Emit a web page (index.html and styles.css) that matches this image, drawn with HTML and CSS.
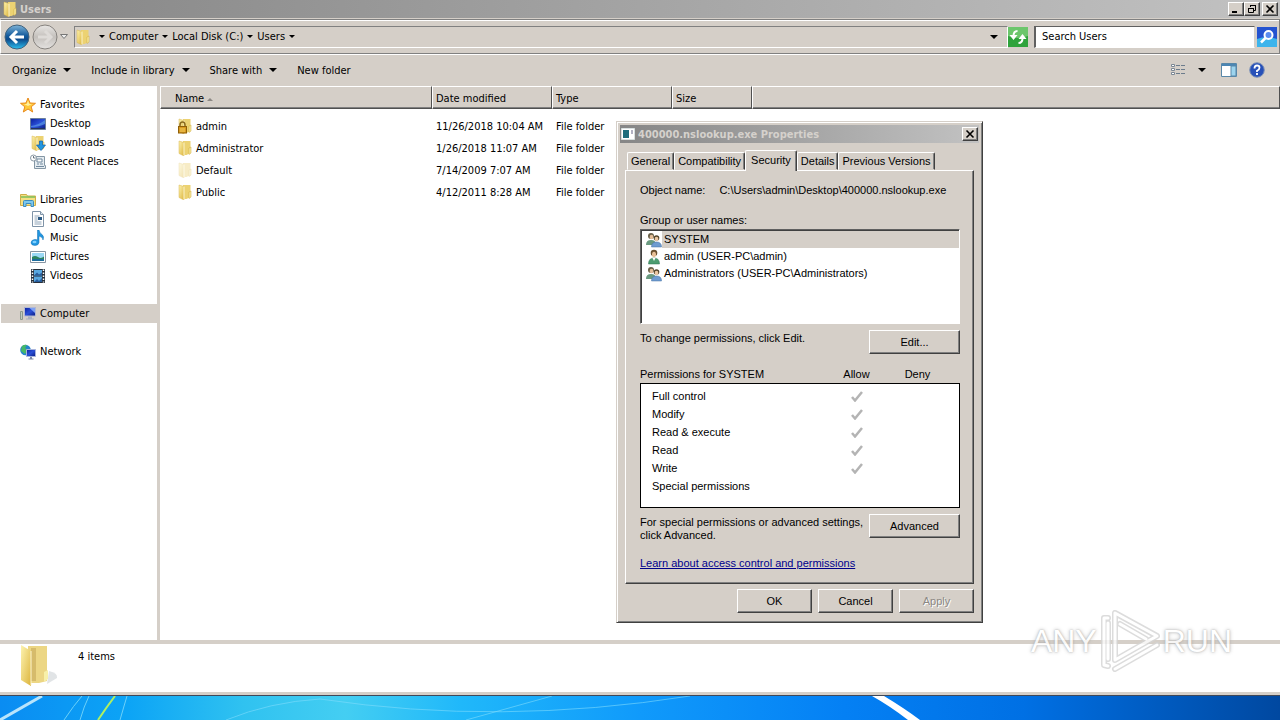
FILE: index.html
```html
<!DOCTYPE html>
<html lang="en">

<head>
    <meta charset="UTF-8">
    <title>Users</title>
    <link rel="stylesheet" href="styles.css">
</head>

<body>

    <!-- Shared icons -->
    <svg class="sprite" width="0" height="0">
        <defs>
            <linearGradient id="gFolder" x1="0" x2="1" y1="0" y2="1">
                <stop offset="0" stop-color="#fdf3b0" />
                <stop offset="1" stop-color="#dcb43c" />
            </linearGradient>
            <linearGradient id="gBlue" x1="0" x2="0" y1="0" y2="1">
                <stop offset="0" stop-color="#7fb4d8" />
                <stop offset="0.45" stop-color="#135a9c" />
                <stop offset="0.6" stop-color="#0d4b8c" />
                <stop offset="1" stop-color="#2cc0f0" />
            </linearGradient>
            <linearGradient id="gGray" x1="0" x2="0" y1="0" y2="1">
                <stop offset="0" stop-color="#e8e6e4" />
                <stop offset="0.5" stop-color="#c4c0bc" />
                <stop offset="1" stop-color="#e4e2e0" />
            </linearGradient>
            <linearGradient id="gScreen" x1="0" x2="1" y1="0" y2="1">
                <stop offset="0" stop-color="#0a1e9c" />
                <stop offset="0.5" stop-color="#2a50d8" />
                <stop offset="1" stop-color="#0a1a80" />
            </linearGradient>
        </defs>
        <symbol id="folder" viewBox="0 0 16 16">
            <path d="M6 1h7.500v12l-4 2H6z" fill="#ecd272" />
            <path d="M12 8l2-1v6l-2 1.500z" fill="#f7e9a0" stroke="#cfa93a" stroke-width=".5" />
            <path d="M2 1l5 1.500V16l-5-2.500z" fill="url(#gFolder)" stroke="#d9b650" stroke-width=".5" />
            <path d="M7 2.500V15.500" stroke="#fff9d4" />
        </symbol>
        <symbol id="lock" viewBox="0 0 16 16">
            <use href="#folder" />
            <path d="M3 9V7a2 2.500 0 0 1 5 0v2" fill="none" stroke="#8a6a20" stroke-width="1.500" />
            <rect x="1.500" y="8.500" width="8" height="6.500" fill="#d89a20" stroke="#8f5f08" />
            <path d="M3 11h5M3 13h5" stroke="#f5cf60" />
        </symbol>
        <symbol id="star" viewBox="0 0 16 16">
            <path d="M8 1l2 5 5.500.300-4.300 3.500L12.700 15 8 12 3.300 15l1.500-5.200L.500 6.300 6 6z" fill="#ffc93a" stroke="#e88a1c" />
            <path d="M8 3.500l1.200 3.500H12L8 9 4 7h2.800z" fill="#fff0a0" />
        </symbol>
        <symbol id="desktop" viewBox="0 0 16 16">
            <path d="M.500 2.500h15v11H.500z" fill="url(#gScreen)" stroke="#6b7f9c" />
            <path d="M1 10q8-1 14-6v4q-6 3-14 3z" fill="#5b9be8" opacity=".7" />
            <path d="M1 12.500h14" stroke="#24345c" />
        </symbol>
        <symbol id="downloads" viewBox="0 0 16 16">
            <use href="#folder" />
            <path d="M9.500 6h3v4H15.500l-4.500 5.500L6.500 10h3z" fill="#2196e0" stroke="#0e5ea8" stroke-width=".7" />
        </symbol>
        <symbol id="recent" viewBox="0 0 16 16">
            <path d="M4.500 2.500h10v9h1v3h-11z" fill="#e4ebf0" stroke="#8496a4" />
            <path d="M7 5h5v3H7zM7 10h2M10 10h3M6 12.500h8" fill="#fff" stroke="#71899e" />
            <circle cx="3.500" cy="4" r="3" fill="#fff" stroke="#8a98a4" />
            <path d="M3.500 2v2h2" fill="none" stroke="#456" stroke-width=".8" />
        </symbol>
        <symbol id="libraries" viewBox="0 0 16 16">
            <path d="M.500 2.500h6l1 1.500h8v9.500H.500z" fill="#f5df82" stroke="#cfae48" />
            <path d="M1 5h14" stroke="#7bbf58" stroke-width="1.500" />
            <path d="M3.500 14.500v-5q0-1 1-1h8q1 0 1 1v5h-2.500v-3h-5v3z" fill="#7cc8ee" stroke="#3c8cc0" />
        </symbol>
        <symbol id="documents" viewBox="0 0 16 16">
            <path d="M2.500.500h8l3 3v12h-11z" fill="#fff" stroke="#8094a8" />
            <path d="M10.500.500v3h3" fill="#dde8f0" stroke="#8094a8" />
            <path d="M4.500 5h5M4.500 7h3M4.500 9h3M4.500 11h7M4.500 13h7" stroke="#8fa4b8" />
            <path d="M8 6h4v3H8z" fill="#2c5a84" />
        </symbol>
        <symbol id="music" viewBox="0 0 16 16">
            <path d="M7.500 0h1.500q.500 3 3 4.500 2.500 2 1 5.500 0-3-4-4v6.500q-.500 3-4 3t-4-2.500q0-3 3.500-3.500 2-.300 3 .500z" fill="#2196e0" stroke="#1270b4" stroke-width=".5" />
            <ellipse cx="4.500" cy="12" rx="2" ry="1.200" fill="#7fd0ff" />
        </symbol>
        <symbol id="pictures" viewBox="0 0 16 16">
            <path d="M.500 2.500h15v11H.500z" fill="#fff" stroke="#8795a2" />
            <path d="M2 4h12v8H2z" fill="#9bd8f4" />
            <path d="M2 8q3-2 6 0t6-.500V10H2z" fill="#2c8460" />
            <path d="M2 10h12v2H2z" fill="#1c6c9c" />
        </symbol>
        <symbol id="videos" viewBox="0 0 16 16">
            <path d="M1 1h14v14H1z" fill="#26303c" />
            <path d="M4 2h8v5.500H4zM4 8.500h8V14H4z" fill="#58a8e0" />
            <path d="M4 7.500l3-3 2 2 3-2v3zM4 14l3-3 2 2 3-3v4z" fill="#275c9c" />
            <path d="M2.500 1.500v13M13.500 1.500v13" stroke="#fff" stroke-width="1.500" stroke-dasharray="1.500 1.500" />
        </symbol>
        <symbol id="computer" viewBox="0 0 16 16">
            <path d="M.500 5.500h2v8h-2z" fill="#c0ccc0" stroke="#8c988c" />
            <path d="M4.500 1.500h11v8.500h-11z" fill="url(#gScreen)" stroke="#b0b8d4" />
            <path d="M9.500 2l5.500 0v5z" fill="#7ca0f4" />
            <path d="M8 10.500h4v2h2v1H6v-1h2z" fill="#a8b0c0" />
        </symbol>
        <symbol id="network" viewBox="0 0 16 16">
            <circle cx="5.500" cy="6" r="5.300" fill="#2484cc" />
            <path d="M2 2q3-2 5-1L5 4l3 2-3 4-4-3z" fill="#46b868" />
            <path d="M6.500 5.500h9v7h-9z" fill="url(#gScreen)" stroke="#a8b4dc" />
            <path d="M10 13h2v1.500h1.500v1h-5v-1H10z" fill="#7a88a8" />
        </symbol>
        <symbol id="group" viewBox="0 0 16 16">
            <circle cx="5" cy="4" r="3" fill="#6a6048" />
            <ellipse cx="5.500" cy="5" rx="1.800" ry="2.300" fill="#e4be98" />
            <path d="M0 13q0-5 5-5t5 5z" fill="#6a9a80" />
            <circle cx="10.500" cy="6" r="2.800" fill="#54452c" />
            <ellipse cx="10.500" cy="7" rx="1.800" ry="2.300" fill="#ecc8a4" />
            <path d="M5.500 15q0-5 5-5t5 5z" fill="#6f9cd0" stroke="#4470a4" stroke-width=".5" />
        </symbol>
        <symbol id="user" viewBox="0 0 16 16">
            <circle cx="8" cy="4" r="3.300" fill="#6a5030" />
            <ellipse cx="8" cy="5.500" rx="2" ry="2.800" fill="#e8c098" />
            <path d="M2.500 15q0-6 5.500-6t5.500 6z" fill="#4c9c70" stroke="#2c7450" stroke-width=".5" />
            <path d="M6.500 9h3L8 12z" fill="#fff" />
        </symbol>
        <symbol id="check" viewBox="0 0 12 12">
            <path d="M1 7l3 3.500L11 2" fill="none" stroke="#b4b4b4" stroke-width="2.500" />
        </symbol>
        <symbol id="down" viewBox="0 0 8 4">
            <path d="M0 0h8L4 4z" />
        </symbol>
    </svg>

    <div class="window">
        <div class="titlebar">
            <svg class="icon"><use href="#folder" /></svg>
            <h1>Users</h1>
            <button class="sys" aria-label="Minimize"><svg viewBox="0 0 12 10"><path d="M2 8h5" stroke="#000" stroke-width="2" /></svg></button>
            <button class="sys" aria-label="Restore"><svg viewBox="0 0 12 10"><path d="M4.500 3V1.500h5v5H8M4 1.500h6M2.500 4.500h5v4h-5zM2 4.500h6" fill="none" stroke="#000" /></svg></button>
            <button class="sys close" aria-label="Close"><svg viewBox="0 0 12 10"><path d="M2.500 1.500l7 7M9.500 1.500l-7 7" stroke="#000" stroke-width="1.600" /></svg></button>
        </div>

        <div class="navbar">
            <button class="round" aria-label="Back">
                <svg viewBox="0 0 26 26"><circle cx="13" cy="13" r="12" fill="url(#gBlue)" stroke="#42627c" /><path d="M13 7l-6 6 6 6M7.500 13H20" fill="none" stroke="#fff" stroke-width="3" /></svg>
            </button>
            <button class="round" aria-label="Forward">
                <svg viewBox="0 0 26 26"><circle cx="13" cy="13" r="12" fill="url(#gGray)" stroke="#86827e" /><path d="M13 7l6 6-6 6M18.500 13H6" fill="none" stroke="#dedbd8" stroke-width="3" /></svg>
            </button>
            <button class="recent" aria-label="Recent pages"><svg viewBox="0 0 8 5"><path d="M.500.500h7L4 4.500z" fill="#eee" stroke="#777" /></svg></button>
            <div class="address">
                <svg class="icon"><use href="#folder" /></svg>
                <svg class="tri"><use href="#down" /></svg>
                <button>Computer</button>
                <svg class="tri"><use href="#down" /></svg>
                <button>Local Disk (C:)</button>
                <svg class="tri"><use href="#down" /></svg>
                <button>Users</button>
                <svg class="tri"><use href="#down" /></svg>
                <button class="history" aria-label="Previous locations"><svg class="arrow"><use href="#down" /></svg></button>
            </div>
            <button class="square" aria-label="Refresh">
                <svg viewBox="0 0 20 20"><path d="M0 0h20v20H0z" fill="#2fa33c" /><path d="M0 0h20v9q-10 4-20 0z" fill="#6cc66c" /><path d="M9.500 4Q5.500 4 5.500 9M10.500 16q4 0 4-5" fill="none" stroke="#fff" stroke-width="2" /><path d="M1.500 8h8l-4 5zM10.500 12h8l-4-5z" fill="#fff" /></svg>
            </button>
            <input class="search" type="text" value="Search Users" aria-label="Search Users">
            <button class="square" aria-label="Search">
                <svg viewBox="0 0 20 20"><path d="M0 0h20v20H0z" fill="#2453d0" /><path d="M0 12q10-4 20 0v8H0z" fill="#3cb4ec" /><circle cx="11.500" cy="8" r="4" fill="#5a8cf0" stroke="#fff" stroke-width="2" /><path d="M8.500 11L4 15.500" stroke="#fff" stroke-width="2.500" /></svg>
            </button>
        </div>

        <div class="toolbar">
            <button>Organize <svg class="arrow"><use href="#down" /></svg></button>
            <button>Include in library <svg class="arrow"><use href="#down" /></svg></button>
            <button>Share with <svg class="arrow"><use href="#down" /></svg></button>
            <button>New folder</button>
            <div class="tools">
                <button class="views" aria-label="Change your view">
                    <svg class="icon" viewBox="0 0 16 16"><path d="M1.500 2.500h3v2h-3zM1.500 6.500h3v2h-3zM1.500 10.500h3v2h-3z" fill="#fff" stroke="#7b8794" /><path d="M6 3.500h4M11 3.500h4M6 7.500h4M11 7.500h4M6 11.500h4M11 11.500h4" stroke="#6c7c8c" /></svg>
                    <svg class="arrow"><use href="#down" /></svg>
                </button>
                <button aria-label="Preview pane">
                    <svg class="icon" viewBox="0 0 16 16"><path d="M.500 1.500h15v13H.500z" fill="#fff" stroke="#5887a8" /><path d="M1 3h14" stroke="#4b86b4" stroke-width="2" /><path d="M10 4h5v10h-5z" fill="#9cd4ee" stroke="#5887a8" /></svg>
                </button>
                <button aria-label="Help">
                    <svg class="icon" viewBox="0 0 16 16"><circle cx="8" cy="8" r="7.300" fill="#2750b8" stroke="#7f93b8" /><path d="M5.500 6.500q0-3 2.500-3t2.500 2.300Q10.500 7.500 8 8.800V10M8 11v2" fill="none" stroke="#fff" stroke-width="1.800" /></svg>
                </button>
            </div>
        </div>

        <div class="content">
            <nav class="sidebar">
                <ul>
                    <li><svg class="icon"><use href="#star" /></svg>Favorites</li>
                    <li class="sub"><svg class="icon"><use href="#desktop" /></svg>Desktop</li>
                    <li class="sub"><svg class="icon"><use href="#downloads" /></svg>Downloads</li>
                    <li class="sub"><svg class="icon"><use href="#recent" /></svg>Recent Places</li>
                </ul>
                <ul>
                    <li><svg class="icon"><use href="#libraries" /></svg>Libraries</li>
                    <li class="sub"><svg class="icon"><use href="#documents" /></svg>Documents</li>
                    <li class="sub"><svg class="icon"><use href="#music" /></svg>Music</li>
                    <li class="sub"><svg class="icon"><use href="#pictures" /></svg>Pictures</li>
                    <li class="sub"><svg class="icon"><use href="#videos" /></svg>Videos</li>
                </ul>
                <ul>
                    <li class="selected"><svg class="icon"><use href="#computer" /></svg>Computer</li>
                </ul>
                <ul>
                    <li><svg class="icon"><use href="#network" /></svg>Network</li>
                </ul>
            </nav>

            <main class="files">
                <table>
                    <colgroup>
                        <col class="col-name">
                        <col class="col-date">
                        <col class="col-type">
                        <col class="col-size">
                        <col>
                    </colgroup>
                    <thead>
                        <tr>
                            <th>Name <svg class="sort" viewBox="0 0 6 3"><path d="M0 3l3-3 3 3z" fill="#8c8884" /></svg></th>
                            <th>Date modified</th>
                            <th>Type</th>
                            <th>Size</th>
                            <th></th>
                        </tr>
                    </thead>
                    <tbody>
                        <tr>
                            <td><svg class="icon"><use href="#lock" /></svg>admin</td>
                            <td>11/26/2018 10:04 AM</td>
                            <td>File folder</td>
                            <td></td>
                            <td></td>
                        </tr>
                        <tr>
                            <td><svg class="icon"><use href="#folder" /></svg>Administrator</td>
                            <td>1/26/2018 11:07 AM</td>
                            <td>File folder</td>
                            <td></td>
                            <td></td>
                        </tr>
                        <tr>
                            <td><svg class="icon faded"><use href="#folder" /></svg>Default</td>
                            <td>7/14/2009 7:07 AM</td>
                            <td>File folder</td>
                            <td></td>
                            <td></td>
                        </tr>
                        <tr>
                            <td><svg class="icon"><use href="#folder" /></svg>Public</td>
                            <td>4/12/2011 8:28 AM</td>
                            <td>File folder</td>
                            <td></td>
                            <td></td>
                        </tr>
                    </tbody>
                </table>
            </main>
        </div>

        <footer class="details">
            <svg class="big-folder" viewBox="0 0 40 44">
                <path d="M27 40l10-6q1-5-8-7z" fill="#d4d8dc" opacity=".7" />
                <path d="M8 2h19v35l-8 2H8z" fill="#ecd684" />
                <path d="M11 4h5v33h-5z" fill="#c8a95a" opacity=".6" />
                <path d="M24 28l4-2v9l-4 3z" fill="#f8f0a8" />
                <path d="M1 1l10 6v35L1 36z" fill="url(#gFolder)" />
                <path d="M11 7v34" stroke="#fdf6d0" />
            </svg>
            <p>4 items</p>
        </footer>
    </div>

    <svg class="wallpaper" viewBox="0 0 1280 24" preserveAspectRatio="none">
        <defs>
            <linearGradient id="sky">
                <stop offset="0" stop-color="#0a8cf2" />
                <stop offset=".1" stop-color="#0ca4f6" />
                <stop offset=".19" stop-color="#30c2f0" />
                <stop offset=".27" stop-color="#44cef2" />
                <stop offset=".36" stop-color="#20b8fa" />
                <stop offset=".5" stop-color="#109afb" />
                <stop offset=".66" stop-color="#0480f4" />
                <stop offset=".8" stop-color="#0070e4" />
                <stop offset="1" stop-color="#0048a0" />
            </linearGradient>
        </defs>
        <path d="M0 0h1280v24H0z" fill="url(#sky)" />
        <path d="M0 24L42 0" stroke="#b8e4fc" stroke-width="3" />
        <path d="M64 24Q74 9 82 0M80 24Q84 10 89 0M120 24Q124 10 127 0" fill="none" stroke="#6cd0f8" />
        <path d="M98 24Q106 12 115 0" fill="none" stroke="#b0f060" stroke-width="2" />
        <path d="M226 24Q270 6 320 3Q500 30 690 0M466 24L552 0" fill="none" stroke="#80dcfc" opacity=".6" />
        <path d="M872 0h12q20 12 36 24h-12q-18-14-36-24z" fill="#fff" />
    </svg>

    <section class="dialog">
        <div class="titlebar">
            <svg class="icon" viewBox="0 0 16 16"><path d="M1.500 2.500h13v11h-13z" fill="#fff" stroke="#d8e0e0" /><path d="M3 4h6v8H3z" fill="#1c6c7c" /><path d="M11 5h2M11 7h2" stroke="#668" /></svg>
            <h2>400000.nslookup.exe Properties</h2>
            <button class="sys" aria-label="Close"><svg viewBox="0 0 12 10"><path d="M2.500 1.500l7 7M9.500 1.500l-7 7" stroke="#000" stroke-width="1.600" /></svg></button>
        </div>

        <div class="tabs">
            <button>General</button>
            <button>Compatibility</button>
            <button class="active">Security</button>
            <button>Details</button>
            <button>Previous Versions</button>
        </div>

        <div class="panel">
            <div class="object">
                <span>Object name:</span>
                <span>C:\Users\admin\Desktop\400000.nslookup.exe</span>
            </div>

            <p>Group or user names:</p>
            <ul class="users">
                <li class="selected"><svg class="icon"><use href="#group" /></svg><span>SYSTEM</span></li>
                <li><svg class="icon"><use href="#user" /></svg><span>admin (USER-PC\admin)</span></li>
                <li><svg class="icon"><use href="#group" /></svg><span>Administrators (USER-PC\Administrators)</span></li>
            </ul>

            <div class="row">
                <p>To change permissions, click Edit.</p>
                <button class="btn wide">Edit...</button>
            </div>

            <table class="permissions">
                <colgroup>
                    <col>
                    <col class="col-check">
                    <col class="col-check">
                    <col class="col-end">
                </colgroup>
                <thead>
                    <tr>
                        <th>Permissions for SYSTEM</th>
                        <th>Allow</th>
                        <th>Deny</th>
                        <th></th>
                    </tr>
                </thead>
                <tbody>
                    <tr><td>Full control</td><td><svg class="check"><use href="#check" /></svg></td><td></td><td></td></tr>
                    <tr><td>Modify</td><td><svg class="check"><use href="#check" /></svg></td><td></td><td></td></tr>
                    <tr><td>Read &amp; execute</td><td><svg class="check"><use href="#check" /></svg></td><td></td><td></td></tr>
                    <tr><td>Read</td><td><svg class="check"><use href="#check" /></svg></td><td></td><td></td></tr>
                    <tr><td>Write</td><td><svg class="check"><use href="#check" /></svg></td><td></td><td></td></tr>
                    <tr><td>Special permissions</td><td></td><td></td><td></td></tr>
                </tbody>
            </table>

            <div class="row">
                <p>For special permissions or advanced settings,<br>click Advanced.</p>
                <button class="btn wide">Advanced</button>
            </div>

            <a href="#">Learn about access control and permissions</a>
        </div>

        <div class="actions">
            <button class="btn">OK</button>
            <button class="btn">Cancel</button>
            <button class="btn" disabled>Apply</button>
        </div>
    </section>

    <div class="watermark">
        <span>ANY</span>
        <svg viewBox="0 0 60 64">
            <g fill="none" stroke-linejoin="round" stroke-linecap="round">
                <path d="M15 4v47l42-24zM20 15l26 15M8 9H4v47l4 1M8 14v36M15 60l42-24" stroke="#d4d4d4" stroke-width="6" />
                <path d="M15 4v47l42-24zM20 15l26 15M8 9H4v47l4 1M8 14v36M15 60l42-24" stroke="#fff" stroke-width="3" />
            </g>
        </svg>
        <span>RUN</span>
    </div>

</body>

</html>
```
FILE: styles.css
```css
* {
    box-sizing: border-box;
}

body {
    margin: 0;
    height: 100vh;
    display: flex;
    flex-direction: column;
    overflow: hidden;
    font-family: "DejaVu Sans Condensed", "DejaVu Sans", sans-serif;
    font-size: 11px;
    line-height: 13px;
    color: #000;
    background: #0a8cf2;
}

h1, h2, p, ul {
    margin: 0;
    padding: 0;
    list-style: none;
}

button {
    font: inherit;
    color: inherit;
    padding: 0;
    border: 0;
    background: none;
}

svg {
    display: block;
    flex: none;
}

.sprite {
    position: absolute;
}

.icon {
    width: 16px;
    height: 16px;
}

.arrow {
    width: 8px;
    height: 4px;
}

.tri {
    width: 6px;
    height: 3px;
}

/* Explorer window */
.window {
    flex: 1;
    min-height: 0;
    display: flex;
    flex-direction: column;
    background: #d5cfc8;
    border-bottom: 1px solid #404858;
}

.titlebar {
    display: flex;
    align-items: center;
    height: 18px;
    padding: 0 2px;
    background: linear-gradient(to right, #868686, #c2c2c2);
}

.titlebar h1,
.titlebar h2 {
    flex: 1;
    margin-left: 2px;
    font-size: 11px;
    font-weight: bold;
    color: #d5d1cc;
}

.sys {
    width: 16px;
    height: 14px;
    padding: 1px;
    background: #d5cfc8;
    border: 1px solid;
    border-color: #fff #404040 #404040 #fff;
    box-shadow: inset -1px -1px #808080;
}

.sys.close {
    margin-left: 2px;
}

.navbar {
    display: flex;
    align-items: center;
    height: 35px;
    margin-top: 1px;
    padding: 0 2px 0 3px;
    border: 1px solid #808080;
    border-left-color: #fff;
    box-shadow: inset 0 1px #fff, 0 1px #fff;
}

.round {
    width: 26px;
    height: 26px;
    margin-right: 2px;
}

.recent {
    width: 8px;
    height: 5px;
    margin-right: 6px;
}

.address {
    flex: 1;
    display: flex;
    align-items: center;
    height: 22px;
    gap: 4px;
    border: 1px solid;
    border-color: #808080 #fff #fff #808080;
}

.address .tri:nth-child(2) {
    margin-left: 4px;
}

.history {
    margin: 0 9px 0 auto;
}

.square {
    width: 20px;
    height: 20px;
}

.search {
    width: 221px;
    height: 22px;
    margin: 0 2px 0 6px;
    padding: 0 6px;
    font: inherit;
    color: #000;
    background: #fff;
    border: 1px solid;
    border-color: #606060 #d5cfc8 #fff #606060;
    border-left-width: 2px;
}

.toolbar {
    display: flex;
    align-items: center;
    gap: 20px;
    height: 32px;
    padding: 0 15px 0 12px;
}

.toolbar button {
    display: flex;
    align-items: center;
    gap: 7px;
}

.tools {
    display: flex;
    gap: 12px;
    margin-left: auto;
}

.tools .views {
    gap: 12px;
    margin-right: 3px;
}

.content {
    flex: 1;
    min-height: 0;
    display: flex;
    gap: 3px;
}

.sidebar {
    width: 157px;
    padding: 9px 0 0 1px;
    background: #fff;
}

.sidebar ul {
    margin-bottom: 19px;
}

.sidebar li {
    display: flex;
    align-items: center;
    gap: 4px;
    height: 19px;
    padding-left: 19px;
}

.sidebar .sub {
    padding-left: 29px;
}

.sidebar .selected {
    background: #d5cfc8;
}

.files {
    flex: 1;
    background: #fff;
}

.files table {
    width: 100%;
    table-layout: fixed;
    border-collapse: separate;
    border-spacing: 0;
}

.col-name {
    width: 272px;
}

.col-date,
.col-type {
    width: 120px;
}

.col-size {
    width: 80px;
}

.files th {
    height: 23px;
    padding: 2px 0 0 3px;
    font-weight: normal;
    text-align: left;
    white-space: nowrap;
    background: #d5cfc8;
    border: 1px solid;
    border-color: #fff #505050 #505050 #fff;
    box-shadow: inset 0 -1px #808080;
}

.files th:first-child {
    padding-left: 14px;
}

.sort {
    display: inline-block;
    width: 6px;
    height: 3px;
    vertical-align: middle;
}

.files tbody::before {
    content: "";
    display: block;
    height: 6px;
}

.files td {
    height: 22px;
    padding: 0 0 0 4px;
    white-space: nowrap;
}

.files td:first-child {
    display: flex;
    align-items: center;
    gap: 3px;
    padding-left: 17px;
}

.faded {
    opacity: 0.4;
}

.details {
    display: flex;
    gap: 18px;
    height: 55px;
    padding: 0 20px;
    background: #fff;
    border-top: 4px solid #d5cfc8;
    border-bottom: 3px solid #d5cfc8;
}

.details p {
    margin-top: 6px;
}

.big-folder {
    width: 40px;
    height: 44px;
}

.wallpaper {
    width: 100%;
    height: 24px;
}

/* Properties dialog, floats over the explorer window */
.dialog {
    position: absolute;
    left: 616px;
    top: 121px;
    width: 367px;
    padding: 3px;
    font-family: "Liberation Sans", sans-serif;
    background: #d5cfc8;
    border: 1px solid;
    border-color: #d5cfc8 #404040 #404040 #d5cfc8;
    box-shadow: inset 1px 1px #fff, inset -1px -1px #808080;
}

.dialog .titlebar {
    height: 18px;
    padding: 0 1px 0 0;
    font-family: "DejaVu Sans Condensed", "DejaVu Sans", sans-serif;
}

.tabs {
    display: flex;
    align-items: flex-end;
    margin-top: 7px;
    padding: 0 7px;
}

.tabs button {
    height: 18px;
    padding: 0 3px;
    border: 1px solid;
    border-color: #fff #404040 transparent #fff;
    border-radius: 2px 2px 0 0;
    box-shadow: inset -1px 0 #808080;
}

.tabs .active {
    height: 21px;
    margin-bottom: -1px;
    padding: 0 5px 2px;
    background: #d5cfc8;
    border-bottom: 0;
}

.panel {
    display: flex;
    flex-direction: column;
    margin: 0 5px;
    padding: 13px 13px 13px 14px;
    border: 1px solid;
    border-color: #fff #404040 #404040 #fff;
    box-shadow: inset -1px -1px #808080;
}

.object {
    display: flex;
    gap: 14px;
    margin-bottom: 17px;
}

.users {
    height: 95px;
    margin: 2px 0 6px;
    padding-top: 1px;
    background: #fff;
    border: 1px solid;
    border-color: #606060 #fff #fff #606060;
    box-shadow: inset 1px 1px #404040;
}

.users li {
    display: flex;
    align-items: center;
    height: 17px;
    padding-left: 5px;
}

.users span {
    flex: 1;
    padding: 2px;
}

.users .selected span {
    background: #d5cfc8;
}

.row {
    display: flex;
    justify-content: space-between;
    align-items: flex-start;
}

.row p {
    padding-top: 2px;
}

.btn {
    width: 75px;
    height: 24px;
    background: #d5cfc8;
    border: 1px solid;
    border-color: #fff #404040 #404040 #fff;
    box-shadow: inset -1px -1px #808080;
}

.btn.wide {
    width: 91px;
}

.btn:disabled {
    color: #8c8884;
    text-shadow: 1px 1px #fff;
}

.permissions {
    width: 100%;
    margin: 12px 0 6px;
    table-layout: fixed;
    border-collapse: separate;
    border-spacing: 0;
}

.col-check {
    width: 61px;
}

.col-end {
    width: 12px;
}

.permissions th {
    height: 17px;
    padding: 2px 0;
    font-weight: normal;
    text-align: center;
    white-space: nowrap;
}

.permissions th:first-child {
    text-align: left;
}

.permissions tbody {
    outline: 1px solid #000;
    outline-offset: -1px;
}

.permissions td {
    height: 18px;
    padding: 0 0 0 12px;
    background: #fff;
}

.permissions tbody tr:first-child td {
    height: 22px;
    padding-top: 4px;
}

.permissions tbody tr:last-child td {
    height: 31px;
    padding-bottom: 13px;
}

.permissions .check {
    width: 12px;
    height: 12px;
    margin-left: 13px;
}

.dialog a {
    align-self: flex-start;
    margin-top: 15px;
    color: #00008c;
}

.actions {
    display: flex;
    justify-content: flex-end;
    gap: 6px;
    padding: 5px 5px 6px;
}

/* Logo overlay */
.watermark {
    position: absolute;
    right: 48px;
    bottom: 47px;
    display: flex;
    align-items: center;
    gap: 3px;
    font-family: "Liberation Sans", sans-serif;
    font-size: 32px;
    line-height: 40px;
    color: #fff;
    text-shadow: 0 0 2px #999, 0 0 4px #bbb;
    opacity: 0.8;
}

.watermark svg {
    width: 60px;
    height: 64px;
}
```
